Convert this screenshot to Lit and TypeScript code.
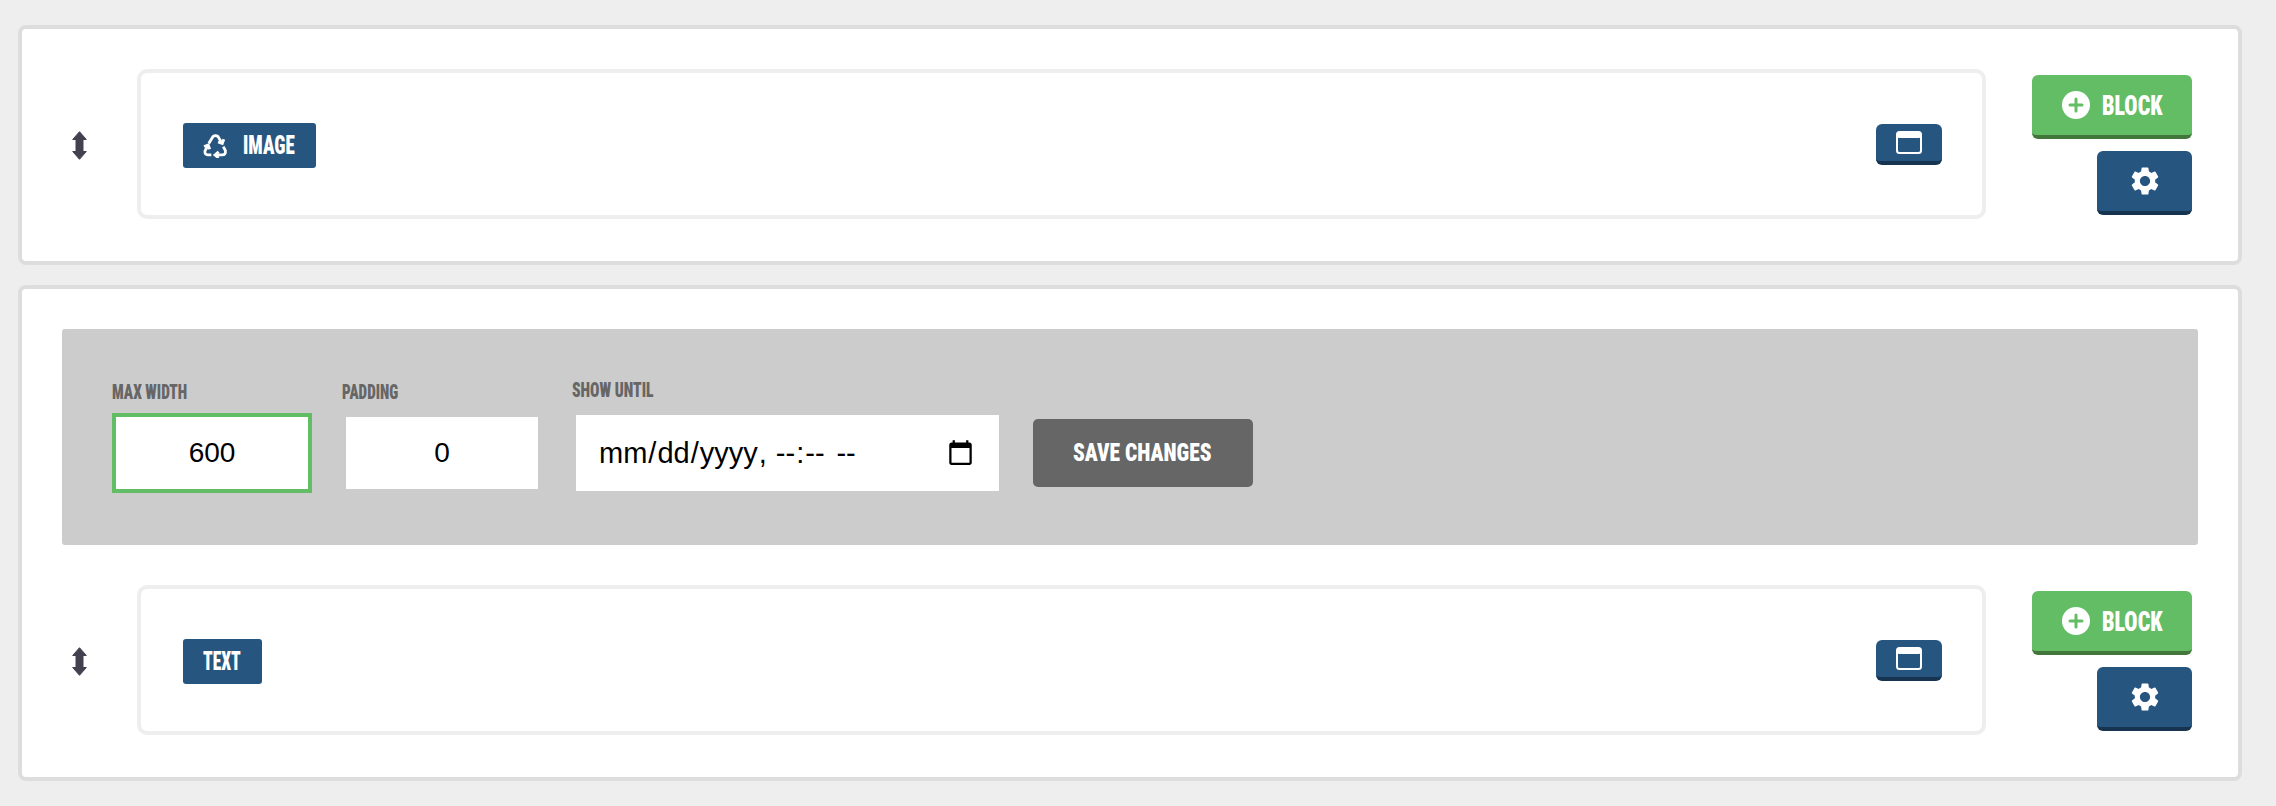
import { LitElement, html, css, svg } from 'lit';
import { customElement } from 'lit/decorators.js';

const recycleIcon = svg`
  <svg class="recycle" viewBox="0 0 24 24" fill="none" stroke="#fff" stroke-width="2.7">
    <path d="M5.5 10 L9.5 3.5 Q12 1.5 14.5 3.5 L18 9.5" />
    <path d="M14.5 8.5 L18.5 10 L20 6" />
    <path d="M19.5 13 L21.5 17 Q22 21 18.5 21 L12 21" />
    <path d="M15 18 L11.5 21 L15 24" />
    <path d="M8 21 L4.5 21 Q1 20.5 2 17 L4.5 12.5" />
    <path d="M1 13 L5 11.5 L6.5 15.5" />
  </svg>`;

const moveIcon = svg`
  <svg class="move" viewBox="0 0 15 29" fill="#444050" stroke="#444050" stroke-width="1" stroke-linejoin="round">
    <path d="M7.5 .7 L14.3 8.5 L11 8.5 L11 20.5 L14.3 20.5 L7.5 28.3 L.7 20.5 L4 20.5 L4 8.5 L.7 8.5 Z" />
  </svg>`;

const windowIcon = svg`
  <svg class="window" viewBox="0 0 26 23">
    <rect x="1" y="1" width="24" height="21" rx="2.5" fill="none" stroke="#fff" stroke-width="2" />
    <rect x="1" y="1" width="24" height="6" rx="2" fill="#fff" />
  </svg>`;

const plusIcon = svg`
  <svg class="plus" viewBox="0 0 28 28">
    <circle cx="14" cy="14" r="14" fill="#fff" />
    <path d="M14 8 V20 M8 14 H20" stroke="#62bd64" stroke-width="3" stroke-linecap="round" />
  </svg>`;

const gearIcon = svg`
  <svg class="gear" viewBox="0 0 24 24" fill="#fff">
    <path d="M19.14 12.94c.04-.3.06-.61.06-.94 0-.32-.02-.64-.07-.94l2.03-1.58c.18-.14.23-.41.12-.61l-1.92-3.32c-.12-.22-.37-.29-.59-.22l-2.39.96c-.5-.38-1.03-.7-1.62-.94l-.36-2.54c-.04-.24-.24-.41-.48-.41h-3.84c-.24 0-.43.17-.47.41l-.36 2.54c-.59.24-1.13.57-1.62.94l-2.39-.96c-.22-.08-.47 0-.59.22L2.74 8.87c-.12.21-.08.47.12.61l2.03 1.58c-.05.3-.09.63-.09.94s.02.64.07.94l-2.03 1.58c-.18.14-.23.41-.12.61l1.92 3.32c.12.22.37.29.59.22l2.39-.96c.5.38 1.03.7 1.62.94l.36 2.54c.05.24.24.41.48.41h3.84c.24 0 .44-.17.47-.41l.36-2.54c.59-.24 1.13-.56 1.62-.94l2.39.96c.22.08.47 0 .59-.22l1.92-3.32c.12-.22.07-.47-.12-.61l-2.01-1.58zM12 15.6c-1.98 0-3.6-1.62-3.6-3.6s1.62-3.6 3.6-3.6 3.6 1.62 3.6 3.6-1.62 3.6-3.6 3.6z" />
  </svg>`;

// No DIN-style condensed face is installed, so narrow the text down to the measured width.
const squeezed = (text: string, width: number, scale: number) =>
  html`<span class="squeeze" style="width:${width}px;--sx:${scale}">${text}</span>`;

@customElement('app-root')
export class AppRoot extends LitElement {
  static styles = css`
    :host {
      display: block;
      background: #eee;
      padding: 25px 34px 25px 18px;
      font-family: 'Liberation Sans', Arial, sans-serif;
    }

    .card {
      background: #fff;
      border: 4px solid #ddd;
      border-radius: 8px;
      padding: 40px 40px 42px 40px;
    }

    .card + .card {
      margin-top: 20px;
    }

    .row {
      display: flex;
      align-items: flex-start;
    }

    .handle {
      width: 75px;
      height: 150px;
      padding: 3px 0 0 10px;
      box-sizing: border-box;
      display: flex;
      align-items: center;
    }

    .move {
      width: 15px;
      height: 29px;
    }

    .box {
      flex: 1;
      height: 150px;
      box-sizing: border-box;
      border: 4px solid #eee;
      border-radius: 10px;
      padding: 50px 40px 0 42px;
      display: flex;
      justify-content: space-between;
      align-items: flex-start;
    }

    .cond {
      font-family: 'Roboto', sans-serif;
      font-weight: 900;
      font-stretch: condensed;
    }

    .squeeze {
      display: inline-block;
      white-space: nowrap;
      text-align: left;
      transform: scaleX(var(--sx));
      transform-origin: left center;
    }

    .badge {
      background: #265680;
      color: #fff;
      border-radius: 3px;
      height: 45px;
      display: flex;
      align-items: center;
      gap: 15px;
      padding: 0 20px;
      font-size: 25px;
    }

    .recycle {
      width: 25px;
      height: 25px;
    }

    .btn {
      border: 0;
      border-radius: 6px;
      border-bottom: 4px solid #16344f;
      background: #265680;
      color: #fff;
      display: flex;
      align-items: center;
      justify-content: center;
      box-sizing: border-box;
      padding: 0;
    }

    .window-btn {
      width: 66px;
      height: 41px;
      margin-top: 1px;
    }

    .window {
      width: 26px;
      height: 23px;
    }

    .actions {
      width: 206px;
      padding-top: 6px;
      margin-right: 6px;
      display: flex;
      flex-direction: column;
      align-items: flex-end;
      gap: 12px;
    }

    .add {
      width: 160px;
      height: 64px;
      background: #62bd64;
      border-bottom-color: #42763a;
      gap: 12px;
      font-size: 27.5px;
    }

    .plus {
      width: 28px;
      height: 28px;
    }

    .settings {
      width: 95px;
      height: 64px;
    }

    .gear {
      width: 34px;
      height: 34px;
    }

    .panel {
      background: #ccc;
      border-radius: 3px;
      height: 216px;
      margin-bottom: 40px;
      padding-left: 50px;
      box-sizing: border-box;
      display: flex;
      align-items: center;
      gap: 30px;
    }

    .field {
      display: flex;
      flex-direction: column;
    }

    .field label {
      color: #666;
      font-size: 20px;
      height: 32px;
      line-height: 22px;
    }

    input {
      box-sizing: border-box;
      width: 200px;
      height: 80px;
      border: 4px solid #ccc;
      background: #fff;
      font-family: 'Liberation Sans', Arial, sans-serif;
      font-size: 28px;
      color: #000;
      text-align: center;
      outline: none;
      padding: 0;
      border-radius: 0;
      appearance: textfield;
    }

    input::-webkit-inner-spin-button,
    input::-webkit-outer-spin-button {
      appearance: none;
      display: none;
      margin: 0;
    }

    input.active {
      border-color: #62bd64;
    }

    input.date {
      width: 431px;
      height: 84px;
      text-align: left;
      padding: 0 22px;
      font-size: 29px;
    }

    input.date::-webkit-datetime-edit-ampm-field {
      margin-left: 4px;
    }

    .save {
      margin-top: 32px;
      width: 220px;
      height: 68px;
      border: 0;
      border-radius: 5px;
      background: #666;
      color: #fff;
      font-size: 26.5px;
      padding: 0 0 4px;
      display: flex;
      align-items: center;
      justify-content: center;
    }
  `;

  renderRow(label: unknown, icon: unknown) {
    return html`
      <div class="row">
        <div class="handle">${moveIcon}</div>
        <div class="box">
          <span class="badge cond">${icon}${label}</span>
          <button class="btn window-btn">${windowIcon}</button>
        </div>
        <div class="actions">
          <button class="btn add cond">${plusIcon}${squeezed('BLOCK', 61, 0.8)}</button>
          <button class="btn settings">${gearIcon}</button>
        </div>
      </div>
    `;
  }

  render() {
    return html`
      <section class="card">${this.renderRow(squeezed('IMAGE', 53, 0.76), recycleIcon)}</section>
      <section class="card">
        <div class="panel">
          <div class="field">
            <label class="cond">${squeezed('MAX WIDTH', 76, 0.77)}</label>
            <input class="active" type="number" value="600" />
          </div>
          <div class="field">
            <label class="cond">${squeezed('PADDING', 59, 0.76)}</label>
            <input type="number" value="0" />
          </div>
          <div class="field">
            <label class="cond">${squeezed('SHOW UNTIL', 83, 0.78)}</label>
            <input class="date" type="datetime-local" />
          </div>
          <button class="save cond">${squeezed('SAVE CHANGES', 141, 0.81)}</button>
        </div>
        ${this.renderRow(squeezed('TEXT', 39, 0.7), null)}
      </section>
    `;
  }
}
